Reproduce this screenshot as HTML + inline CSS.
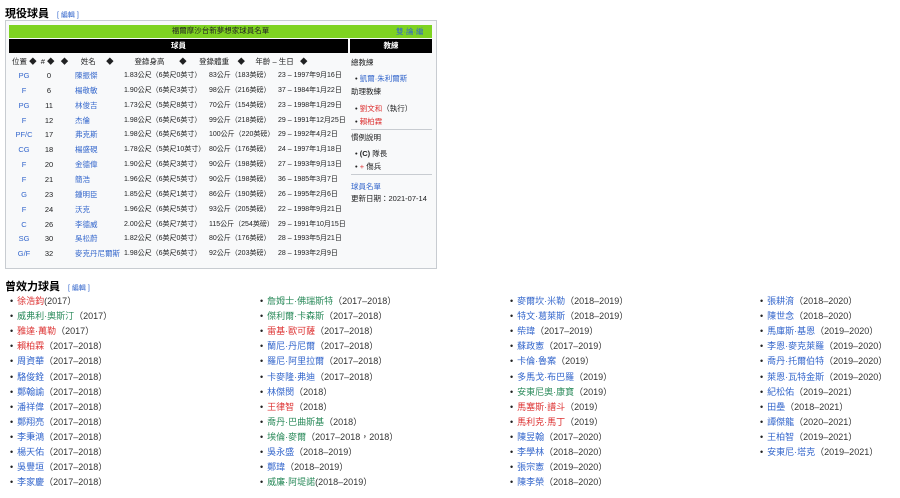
<!DOCTYPE html><html><head><meta charset="utf-8"><style>
body{margin:0;width:900px;height:498px;background:#fff;font-family:"Liberation Sans","Noto Sans CJK TC",sans-serif;color:#202122;position:relative;overflow:hidden}
.a{position:absolute;white-space:nowrap}
.h{font-size:11px;font-weight:bold;color:#000}
.e{font-size:7px;color:#3366cc;font-weight:normal;margin-left:8px}
.b{color:#3366cc}.r{color:#d33}.g{color:#2a8a5a}
.t{font-size:7.5px;line-height:10px}
.li{font-size:9px;line-height:12px;color:#333}
.li:before{content:"•";color:#202122;margin-right:4px}
</style></head><body>
<div class="a h" style="left:5px;top:5px">現役球員<span class="e">[ 編輯 ]</span></div>
<div class="a" style="left:5px;top:20px;width:430px;height:247px;border:1px solid #c8ccd1;background:#f8f9fa"></div>
<div class="a" style="left:9px;top:25px;width:423px;height:13px;background:#7ed321"></div>
<div class="a t" style="left:9px;top:26px;width:423px;text-align:center;color:#222">福爾摩沙台新夢想家球員名單</div>
<div class="a t b" style="left:396px;top:27px">雙·論·編</div>
<div class="a" style="left:9px;top:39px;width:339px;height:14px;background:#000"></div>
<div class="a" style="left:350px;top:39px;width:82px;height:14px;background:#000"></div>
<div class="a t" style="left:9px;top:41px;width:339px;text-align:center;color:#fff;font-weight:bold">球員</div>
<div class="a t" style="left:350px;top:41px;width:82px;text-align:center;color:#fff;font-weight:bold">教練</div>
<div class="a t" style="left:12px;top:57px">位置 ◆ &nbsp;# ◆ &nbsp;&nbsp;◆ &nbsp;&nbsp;&nbsp;&nbsp;&nbsp;姓名 &nbsp;&nbsp;&nbsp;&nbsp;◆ &nbsp;&nbsp;&nbsp;&nbsp;&nbsp;&nbsp;&nbsp;&nbsp;&nbsp;登錄身高 &nbsp;&nbsp;&nbsp;&nbsp;&nbsp;&nbsp;◆ &nbsp;&nbsp;&nbsp;&nbsp;&nbsp;登錄體重 &nbsp;&nbsp;&nbsp;◆ &nbsp;&nbsp;&nbsp;&nbsp;年齡 – 生日 &nbsp;&nbsp;◆</div>
<div id="rows"></div>
<div class="a t" style="left:351px;top:58px">總教練</div>
<div class="a t" style="left:355px;top:74px">• <span class="b">凱爾·朱利爾斯</span></div>
<div class="a t" style="left:351px;top:87px">助理教練</div>
<div class="a t" style="left:355px;top:104px">• <span class="r">劉文和</span>（執行）</div>
<div class="a t" style="left:355px;top:117px">• <span class="r">賴柏霖</span></div>
<div class="a" style="left:351px;top:129px;width:81px;border-top:1px solid #c8ccd1"></div>
<div class="a t" style="left:351px;top:133px">慣例說明</div>
<div class="a t" style="left:355px;top:149px">• <b>(C)</b> 隊長</div>
<div class="a t" style="left:355px;top:162px">• <span class="r">+</span> 傷兵</div>
<div class="a" style="left:351px;top:174px;width:81px;border-top:1px solid #c8ccd1"></div>
<div class="a t b" style="left:351px;top:182px">球員名單</div>
<div class="a t" style="left:351px;top:194px">更新日期：2021-07-14</div>
<div class="a h" style="left:5px;top:278px">曾效力球員<span class="e">[ 編輯 ]</span></div>
<div id="l"></div>
<script>
var R=[["PG","0","陳振傑","1.83公尺（6英尺0英寸）","83公斤（183英磅）","23 – 1997年9月16日"],
["F","6","楊敬敏","1.90公尺（6英尺3英寸）","98公斤（216英磅）","37 – 1984年1月22日"],
["PG","11","林俊吉","1.73公尺（5英尺8英寸）","70公斤（154英磅）","23 – 1998年1月29日"],
["F","12","杰倫","1.98公尺（6英尺6英寸）","99公斤（218英磅）","29 – 1991年12月25日"],
["PF/C","17","弗克斯","1.98公尺（6英尺6英寸）","100公斤（220英磅）","29 – 1992年4月2日"],
["CG","18","楊盛硯","1.78公尺（5英尺10英寸）","80公斤（176英磅）","24 – 1997年1月18日"],
["F","20","金德偉","1.90公尺（6英尺3英寸）","90公斤（198英磅）","27 – 1993年9月13日"],
["F","21","簡浩","1.96公尺（6英尺5英寸）","90公斤（198英磅）","36 – 1985年3月7日"],
["G","23","鍾明臣","1.85公尺（6英尺1英寸）","86公斤（190英磅）","26 – 1995年2月6日"],
["F","24","沃克","1.96公尺（6英尺5英寸）","93公斤（205英磅）","22 – 1998年9月21日"],
["C","26","李德威","2.00公尺（6英尺7英寸）","115公斤（254英磅）","29 – 1991年10月15日"],
["SG","30","吳松蔚","1.82公尺（6英尺0英寸）","80公斤（176英磅）","28 – 1993年5月21日"],
["G/F","32","麥克丹尼爾斯","1.98公尺（6英尺6英寸）","92公斤（203英磅）","28 – 1993年2月9日"]];
var h="";R.forEach(function(r,i){var y=71+i*14.85;
h+='<div class="a t b" style="left:10px;width:28px;text-align:center;top:'+y+'px">'+r[0]+'</div>';
h+='<div class="a t" style="left:42px;width:14px;text-align:center;top:'+y+'px">'+r[1]+'</div>';
h+='<div class="a t b" style="left:75px;top:'+y+'px">'+r[2]+'</div>';
h+='<div class="a t" style="left:124px;top:'+y+'px;font-size:7px">'+r[3]+'</div>';
h+='<div class="a t" style="left:209px;top:'+y+'px;font-size:7px">'+r[4]+'</div>';
h+='<div class="a t" style="left:278px;top:'+y+'px;font-size:7px">'+r[5]+'</div>';});
document.getElementById("rows").innerHTML=h;
var L=[[["r","徐浩鈞","(2017）"],["g","威弗利·奧斯汀","（2017）"],["r","雅達·萬勒","（2017）"],["r","賴柏霖","（2017–2018）"],["b","周資華","（2017–2018）"],["b","駱俊銓","（2017–2018）"],["b","鄭翰諭","（2017–2018）"],["b","潘祥偉","（2017–2018）"],["b","鄭翔亮","（2017–2018）"],["b","李秉鴻","（2017–2018）"],["b","楊天佑","（2017–2018）"],["b","吳豐垣","（2017–2018）"],["b","李家慶","（2017–2018）"]],
[["g","詹姆士·佛瑞斯特","（2017–2018）"],["g","傑利爾·卡森斯","（2017–2018）"],["r","雷基·歐可薩","（2017–2018）"],["b","蘭尼·丹尼爾","（2017–2018）"],["b","羅尼·阿里拉爾","（2017–2018）"],["b","卡麥隆·弗迪","（2017–2018）"],["b","林傑閔","（2018）"],["r","王律智","（2018）"],["g","喬丹·巴曲斯基","（2018）"],["g","埃倫·麥爾","（2017–2018，2018）"],["b","吳永盛","（2018–2019）"],["b","鄭瑋","（2018–2019）"],["g","威廉·阿堤諾","(2018–2019）"]],
[["b","麥爾坎·米勒","（2018–2019）"],["b","特文·葛萊斯","（2018–2019）"],["b","柴瑋","（2017–2019）"],["b","蘇政憲","（2017–2019）"],["b","卡倫·魯案","（2019）"],["b","多馬戈·布巴羅","（2019）"],["g","安東尼奧·康寶","（2019）"],["r","馬塞斯·譜斗","（2019）"],["r","馬利克·馬丁","（2019）"],["b","陳昱翰","（2017–2020）"],["b","李學林","（2018–2020）"],["b","張宗憲","（2019–2020）"],["b","陳李榮","（2018–2020）"]],
[["b","張耕淯","（2018–2020）"],["b","陳世念","（2018–2020）"],["b","馬庫斯·基恩","（2019–2020）"],["b","李恩·麥克萊羅","（2019–2020）"],["b","喬丹·托爾伯特","（2019–2020）"],["b","萊恩·瓦特金斯","（2019–2020）"],["b","紀松佑","（2019–2021）"],["b","田壘","（2018–2021）"],["b","譚傑龍","（2020–2021）"],["b","王柏智","（2019–2021）"],["b","安東尼·塔克","（2019–2021）"]]];
var X=[10,260,510,760];h="";
L.forEach(function(c,ci){c.forEach(function(it,i){h+='<div class="a li" style="left:'+X[ci]+'px;top:'+(295+i*15.1)+'px"><span class="'+it[0]+'">'+it[1]+'</span>'+it[2]+'</div>';});});
document.getElementById("l").innerHTML=h;
</script></body></html>
